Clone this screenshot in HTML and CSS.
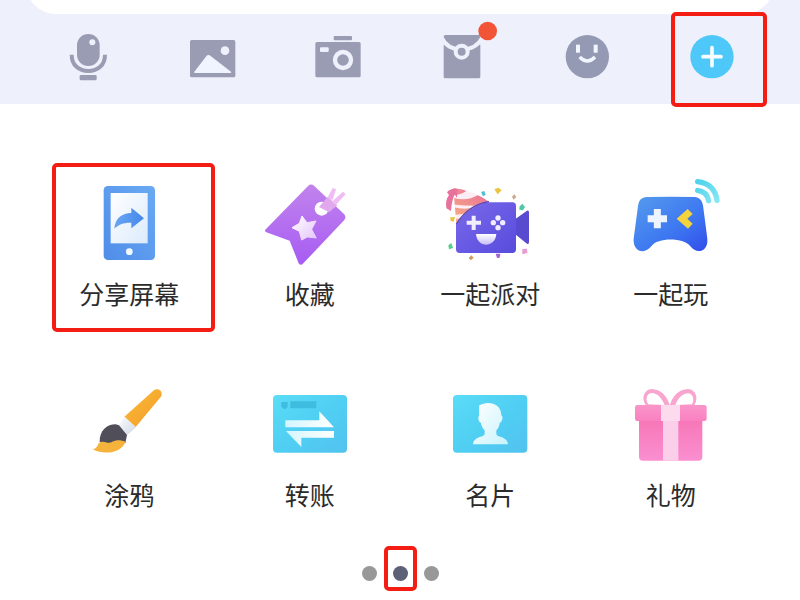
FILE: index.html
```html
<!DOCTYPE html>
<html lang="zh-CN">
<head>
<meta charset="UTF-8">
<meta name="viewport" content="width=device-width, initial-scale=1.0">
<title>聊天面板</title>
<link rel="stylesheet" href="styles.css">
</head>
<body>
<header class="toolbar">
  <input class="message" type="text" aria-label="消息">
  <nav class="tools">
    <button class="tool" aria-label="语音">
      <svg viewBox="114 60 300 240">
        <g fill="#9a9cb4">
          <rect x="231" y="102" width="68" height="96" rx="34"/>
          <rect x="239" y="225" width="51" height="16" rx="4"/>
        </g>
        <path d="M215 164c0 32 22 49 50 49s50-17 50-49" fill="none" stroke="#9a9cb4" stroke-width="12"/>
        <circle cx="277" cy="127" r="9" fill="#eef1fc"/>
      </svg>
    </button>
    <button class="tool" aria-label="图片">
      <svg viewBox="489 60 300 240">
        <rect x="570" y="120" width="136" height="112" rx="5" fill="#9a9cb4"/>
        <circle cx="675" cy="152" r="13" fill="#eef1fc"/>
        <path d="M583 215l37-48q4-4 9-1l64 49q3 4-2 4H585q-4 0-2-4z" fill="#eff4fe"/>
      </svg>
    </button>
    <button class="tool" aria-label="拍照">
      <svg viewBox="864 60 300 240">
        <rect x="1001" y="108" width="55" height="13" rx="3" fill="#9a9cb4"/>
        <rect x="946" y="126" width="136" height="106" rx="5" fill="#9a9cb4"/>
        <rect x="960" y="142" width="26" height="14" rx="3" fill="#eef1fc"/>
        <circle cx="1029" cy="180" r="24" fill="none" stroke="#eef1fc" stroke-width="13"/>
      </svg>
    </button>
    <button class="tool" aria-label="红包">
      <svg viewBox="37 60 300 240">
        <rect x="132" y="105" width="110" height="130" rx="5" fill="#9a9cb4"/>
        <path d="M126 113c10 22 28 35 60 36 32-1 51-14 62-36" fill="none" stroke="#eef1fc" stroke-width="12"/>
        <path d="M126 108l6 4v24l-6 4zM248 108l-6 4v24l6 4z" fill="#eef1fc"/>
        <circle cx="186" cy="155" r="18" fill="#9a9cb4" stroke="#eef1fc" stroke-width="12"/>
        <circle cx="264" cy="93" r="28" fill="#f15437"/>
      </svg>
    </button>
    <button class="tool" aria-label="表情">
      <svg viewBox="411 60 300 240">
        <circle cx="562" cy="170" r="65" fill="#949ab4"/>
        <rect x="528" y="134" width="12" height="24" fill="#f2f6fe"/>
        <rect x="581" y="134" width="12" height="24" fill="#f2f6fe"/>
        <path d="M539 171q23 24 46 0" fill="none" stroke="#f2f6fe" stroke-width="10"/>
      </svg>
    </button>
    <button class="tool tool-more" aria-label="更多">
      <svg viewBox="785 60 300 240">
        <circle cx="935" cy="170" r="65" fill="#4dc8f8"/>
        <path d="M935 143v54M908 170h54" stroke="#f7fcff" stroke-width="11" stroke-linecap="round"/>
      </svg>
    </button>
  </nav>
</header>

<main class="panel">
  <button class="app app-marked">
    <svg viewBox="87 45 360 300" aria-hidden="true">
      <defs>
        <linearGradient id="phone" x1="1" y1="0" x2="0" y2="1"><stop offset="0" stop-color="#6aaaf3"/><stop offset="1" stop-color="#4f8de9"/></linearGradient>
        <linearGradient id="screen" x1="0" y1="0" x2="1" y2="1"><stop offset="0" stop-color="#fff"/><stop offset="1" stop-color="#dceafc"/></linearGradient>
        <linearGradient id="arrow" x1="0" y1="0" x2="1" y2="0"><stop offset="0" stop-color="#6aa6f3"/><stop offset="1" stop-color="#4588ea"/></linearGradient>
      </defs>
      <rect x="191" y="93" width="154" height="222" rx="13" fill="url(#phone)"/>
      <rect x="212" y="114" width="111" height="151" fill="url(#screen)"/>
      <path d="M223 221c2-29 20-46 51-47v-16l38 32-38 30v-17c-23-1-37 5-51 18z" fill="url(#arrow)"/>
      <circle cx="268" cy="290" r="10" fill="#f4f9ff"/>
    </svg>
    <span>分享屏幕</span>
  </button>

  <button class="app">
    <svg viewBox="0 0 360 300" aria-hidden="true">
      <defs>
        <linearGradient id="tag" x1="0" y1="0" x2="0" y2="1"><stop offset="0" stop-color="#c183ec"/><stop offset="1" stop-color="#a75cf3"/></linearGradient>
        <linearGradient id="star" x1="0" y1="0" x2="1" y2="1"><stop offset="0" stop-color="#fff"/><stop offset="1" stop-color="#e4c5fa"/></linearGradient>
      </defs>
      <path d="M174 48q8-8 18-1l90 85q8 8 1 18L160 280q-8 9-14 0l-27-68-70-25q-8-4-1-10z" fill="url(#tag)"/>
      <circle cx="215" cy="116" r="21" fill="#fff"/>
      <path d="M207 111l26-31 29 26-25 21z" fill="#e1a8ee"/>
      <path d="M232 84l16-30 10 4-10 32zM245 95l34-30 8 8-30 32z" fill="#edbdf3"/>
      <path d="M156 138l15 20 27-5-13 25 14 26-27-3-17 9-7-26-22-11 22-13z" fill="url(#star)" stroke="url(#star)" stroke-width="3" stroke-linejoin="round"/>
    </svg>
    <span>收藏</span>
  </button>

  <button class="app">
    <svg viewBox="0 0 360 300" aria-hidden="true">
      <defs>
        <linearGradient id="video" x1="0" y1="0" x2="1" y2="1"><stop offset="0" stop-color="#7969e9"/><stop offset="1" stop-color="#584cdd"/></linearGradient>
        <linearGradient id="smile" x1="0" y1="0" x2="0" y2="1"><stop offset="0" stop-color="#fff"/><stop offset="1" stop-color="#c7bdf8"/></linearGradient>
        <linearGradient id="stripe" x1="1" y1="0" x2="0" y2="1"><stop offset="0" stop-color="#e5679f"/><stop offset="1" stop-color="#f9ab80"/></linearGradient>
        <clipPath id="hat"><path d="M70 54q60 8 107 41-58 10-98 67z"/></clipPath>
      </defs>
      <path d="M251 151l40-29q6-2 6 5v89q0 8-6 5l-40-32z" fill="#594bd0"/>
      <rect x="78" y="97" width="180" height="152" rx="11" fill="url(#video)"/>
      <g clip-path="url(#hat)">
        <path d="M60 45h130v130H60z" fill="#fceef4"/>
        <path d="M60 50h40l8 14q-20 14-48 10zM66 82q44 14 78-7l44 20-24 12q-50 2-98-4zM70 112q40 10 74-3l-20 20-52 6z" fill="url(#stripe)"/>
        <path d="M74 148l36-6-32 26z" fill="#f7a78e"/>
      </g>
      <path d="M82 57q-20-4-31 10l6 8q-12 16-8 40l14 8q2-30 11-50l7 10z" fill="#e8709c"/>
      <path d="M79 162q37-58 98-67" fill="none" stroke="#5946b6" stroke-width="4"/>
      <path d="M131 137v43M110 158h43" stroke="#f1edff" stroke-width="12"/>
      <g fill="#f1edff"><circle cx="204" cy="144" r="8"/><circle cx="190" cy="158" r="8"/><circle cx="218" cy="158" r="8"/><circle cx="204" cy="173" r="8"/></g>
      <path d="M138 192h61c-3 42-58 43-61 0z" fill="url(#smile)"/>
      <path d="M153 66l10-3 4 11-8 5z" fill="#4fbed6"/>
      <path d="M269 109l8-8 8 10-6 10-11-2z" fill="#4fc9a5"/>
      <path d="M193 58l12-5 10 8-12 12zM61 142l14-1-4 14-9-2z" fill="#eac43d"/>
      <path d="M246 80l7-7 6 8-8 8z" fill="#cfa78a"/>
      <path d="M55 226l9-7 5 15-12 4z" fill="#54ce8d"/>
      <path d="M116 264l8-8 7 7-9 8z" fill="#cc9d60"/>
      <path d="M197 251l14 0-2 12-8 1z" fill="#a461d8"/>
      <path d="M277 237l14-1 1 13-15 4z" fill="#e79bd1"/>
    </svg>
    <span>一起派对</span>
  </button>

  <button class="app">
    <svg viewBox="-28 0 360 300" aria-hidden="true">
      <defs>
        <linearGradient id="pad" x1="0" y1="0" x2="1" y2="1"><stop offset="0" stop-color="#549ced"/><stop offset=".6" stop-color="#3d76f1"/><stop offset="1" stop-color="#314dea"/></linearGradient>
        <linearGradient id="wave" x1="0" y1="0" x2="1" y2="1"><stop offset="0" stop-color="#4fd3ea"/><stop offset="1" stop-color="#85e6f5"/></linearGradient>
      </defs>
      <path d="M80 81q74-2 142 0c16 1 23 10 26 25l13 100c3 41-33 47-51 23-15-25-98-29-117 0-20 26-56 16-53-23l13-98c3-18 10-26 27-27z" fill="url(#pad)"/>
      <path d="M111 117v58M82 146h58" stroke="#ecf5ff" stroke-width="21"/>
      <path d="M202 117l15 15-16 14 16 15-14 15-34-30z" fill="#f4d33d"/>
      <path d="M232 61q28 4 33 31M232 35q51 6 58 56" fill="none" stroke="url(#wave)" stroke-width="16" stroke-linecap="round"/>
    </svg>
    <span>一起玩</span>
  </button>

  <button class="app">
    <svg viewBox="-3 -12 360 300" aria-hidden="true">
      <defs>
        <linearGradient id="handle" x1="0" y1="0" x2="1" y2="1"><stop offset="0" stop-color="#fabd40"/><stop offset="1" stop-color="#f39a22"/></linearGradient>
        <linearGradient id="ferrule" x1="0" y1="0" x2="1" y2="1"><stop offset="0" stop-color="#fbfcfe"/><stop offset="1" stop-color="#ced8e2"/></linearGradient>
      </defs>
      <path d="M163 125l87-78c16-13 32 4 22 19l-75 90z" fill="url(#handle)"/>
      <path d="M145 151l19-25 34 31-27 24z" fill="url(#ferrule)"/>
      <path d="M89 201c-1-35 22-53 48-53l10 3 24 29-5 24-37 9z" fill="#504f59"/>
      <path d="M68 223c18-3 13-20 25-22 14-3 17 6 31 1 18-9 27-6 42-2-10 33-62 42-98 23z" fill="#f5b33c"/>
    </svg>
    <span>涂鸦</span>
  </button>

  <button class="app">
    <svg viewBox="0 -12 360 300" aria-hidden="true">
      <defs>
        <linearGradient id="card" x1="0" y1="0" x2="1" y2="1"><stop offset="0" stop-color="#5bdcf6"/><stop offset=".5" stop-color="#50cff3"/><stop offset="1" stop-color="#52c2ef"/></linearGradient>
        <linearGradient id="pale" x1="0" y1="0" x2="1" y2="0"><stop offset="0" stop-color="#d4f5fe"/><stop offset="1" stop-color="#fff"/></linearGradient>
      </defs>
      <rect x="69" y="60" width="222" height="173" rx="12" fill="url(#card)"/>
      <path d="M94 81h19v13q-1 7-10 9-9-4-9-9zM121 79h78v21h-78z" fill="#3fbde0"/>
      <path d="M106 136h102v-27l44 48H106zM108 168h144v20h-98v28z" fill="url(#pale)"/>
    </svg>
    <span>转账</span>
  </button>

  <button class="app">
    <svg viewBox="0 -12 360 300" aria-hidden="true">
      <defs>
        <linearGradient id="person" x1="0" y1="0" x2="1" y2="1"><stop offset="0" stop-color="#fff"/><stop offset="1" stop-color="#c8f3fc"/></linearGradient>
      </defs>
      <rect x="69" y="60" width="223" height="173" rx="12" fill="url(#card)"/>
      <path d="M147 92c24-17 68-8 67 29 8 7 1 20-5 23-2 13-5 17-10 22v12c3 10 34 7 35 30H129c1-23 31-20 35-30v-12c-5-5-10-12-11-22-6-3-11-14-6-22z" fill="url(#person)"/>
    </svg>
    <span>名片</span>
  </button>

  <button class="app">
    <svg viewBox="-12 -12 360 300" aria-hidden="true">
      <defs>
        <linearGradient id="gift" x1="0" y1="0" x2="0" y2="1"><stop offset="0" stop-color="#f777b8"/><stop offset="1" stop-color="#fa8fd0"/></linearGradient>
        <linearGradient id="lid" x1="0" y1="0" x2="0" y2="1"><stop offset="0" stop-color="#f995c8"/><stop offset="1" stop-color="#fa80c2"/></linearGradient>
      </defs>
      <path d="M92 90c-14-20-5-46 18-48 27 1 46 20 54 48zM238 90c14-20 4-46-19-48-27 1-46 20-54 48z" fill="#f8a5d0"/>
      <path d="M100 88c-10-14-6-34 12-34 18 2 28 16 37 36zM231 88c8-14 3-33-13-33-19 3-29 16-37 35z" fill="#fff"/>
      <path d="M72 136h190v109q0 12-12 12H84q-12 0-12-12z" fill="url(#gift)"/>
      <path d="M144 136h46v121h-46z" fill="#fbcfe9"/>
      <rect x="60" y="90" width="215" height="48" rx="7" fill="url(#lid)"/>
      <path d="M138 90h57v48h-57z" fill="#fddbee"/>
    </svg>
    <span>礼物</span>
  </button>
</main>

<footer class="pager">
  <button class="dot" aria-label="第1页"></button>
  <button class="dot dot-active" aria-label="第2页" aria-current="page"></button>
  <button class="dot" aria-label="第3页"></button>
</footer>
</body>
</html>
```

FILE: styles.css
```css
*{margin:0;padding:0;box-sizing:border-box}
body{background:#fff;color:#2b2b2b;font-family:"Noto Sans CJK SC",sans-serif;overflow-x:hidden}
button{border:none;background:none;font-family:inherit;color:inherit;cursor:pointer}
svg{display:block}

.toolbar{background:#eef0fc;padding:0 26px 4px}
.message{display:block;width:100%;height:34px;margin-top:-20px;padding:0 20px;border:none;border-radius:0 0 30px 30px;background:#fff;font-size:16px;outline:none}
.tools{display:grid;grid-template-columns:repeat(6,1fr);padding-top:6px}
.tool{position:relative;display:flex;justify-content:center}
.tool svg{width:100px;height:80px}

.panel{display:grid;grid-template-columns:repeat(4,1fr);row-gap:61px;padding:66px 39px 0}
.app{position:relative;display:flex;flex-direction:column;align-items:center;gap:6px;font-size:25px;line-height:34px}
.app svg{width:120px;height:100px}

.pager{display:flex;justify-content:center;gap:16px;padding:55px 0 19px}
.dot{position:relative;width:15px;height:15px;border-radius:50%;background:#989898}
.dot-active{background:#5d6177}

/* red highlight frames */
.tool-more::after,.app-marked::after,.dot-active::after{content:"";position:absolute;border:4px solid #f31d14;border-radius:5px;pointer-events:none}
.tool-more::after{inset:-8px 7px -7px 22px}
.app-marked::after{inset:-7px 5px -22px 13px}
.dot-active::after{inset:-20px -9px -10px}
```
